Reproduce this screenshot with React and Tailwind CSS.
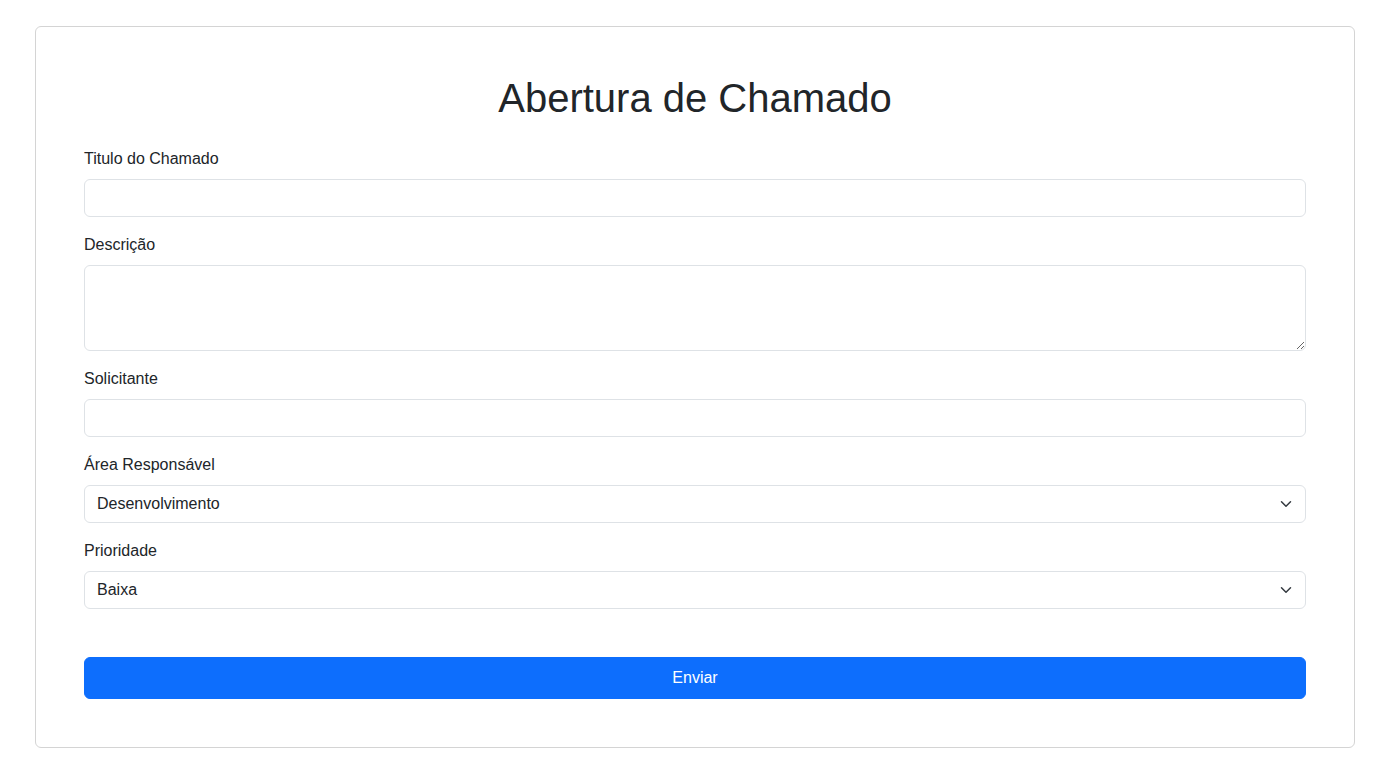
import React from "react";

const font = { fontFamily: '"Liberation Sans", Arial, sans-serif' };

function Chevron() {
  return (
    <svg
      className="pointer-events-none absolute right-[12px] top-1/2 -translate-y-1/2"
      width="16"
      height="12"
      viewBox="0 0 16 16"
      fill="none"
    >
      <path d="m2 5 6 6 6-6" stroke="#343a40" strokeWidth="2" strokeLinecap="round" strokeLinejoin="round" />
    </svg>
  );
}

function Label({ children }) {
  return <label className="mb-2 block text-[16px] leading-[24px] text-[#212529]">{children}</label>;
}

const inputCls =
  "block w-full h-[38px] rounded-[6px] border border-[#dee2e6] bg-white px-[12px] py-[6px] text-[16px] leading-[24px] text-[#212529] outline-none";

export default function App() {
  return (
    <div className="min-h-[780px] bg-white pt-[26px]" style={font}>
      <div className="ml-[35px] w-[1320px] rounded-[6px] border border-[#d4d4d4] bg-white px-[48px] pt-[47px] pb-[48px]">
        <h1 className="mb-[25px] text-center text-[40px] font-normal leading-[48px] text-[#212529]">
          Abertura de Chamado
        </h1>
        <form onSubmit={(e) => e.preventDefault()}>
          <div className="mb-4">
            <Label>Titulo do Chamado</Label>
            <input type="text" className={inputCls} />
          </div>
          <div className="mb-4">
            <Label>Descrição</Label>
            <textarea
              rows={3}
              className="block h-[86px] w-full rounded-[6px] border border-[#dee2e6] bg-white px-[12px] py-[6px] text-[16px] leading-[24px] text-[#212529] outline-none"
            />
          </div>
          <div className="mb-4">
            <Label>Solicitante</Label>
            <input type="text" className={inputCls} />
          </div>
          <div className="mb-4">
            <Label>Área Responsável</Label>
            <div className="relative">
              <select className={inputCls + " appearance-none pr-[36px]"} defaultValue="Desenvolvimento">
                <option>Desenvolvimento</option>
                <option>Infraestrutura</option>
                <option>Suporte</option>
              </select>
              <Chevron />
            </div>
          </div>
          <div>
            <Label>Prioridade</Label>
            <div className="relative">
              <select className={inputCls + " appearance-none pr-[36px]"} defaultValue="Baixa">
                <option>Baixa</option>
                <option>Média</option>
                <option>Alta</option>
              </select>
              <Chevron />
            </div>
          </div>
          <button
            type="submit"
            className="mt-[48px] block h-[42px] w-full rounded-[6px] border border-[#0d6efd] bg-[#0d6efd] text-[16px] leading-[24px] text-white"
          >
            Enviar
          </button>
        </form>
      </div>
    </div>
  );
}
